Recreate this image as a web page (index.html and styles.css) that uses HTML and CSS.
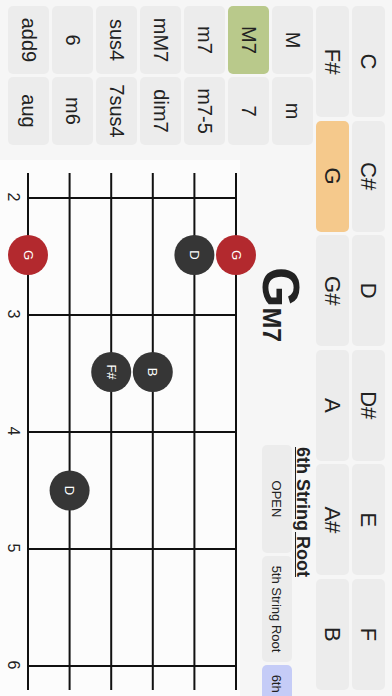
FILE: index.html
```html
<!DOCTYPE html>
<html>

<head>
    <meta charset="utf-8">
    <link rel="stylesheet" href="styles.css">
</head>

<body>
    <!-- the app runs in landscape; the stage is turned a quarter to fit the portrait window -->
    <div class="stage">
        <div class="roots">
            <button class="key">C</button>
            <button class="key">C#</button>
            <button class="key">D</button>
            <button class="key">D#</button>
            <button class="key">E</button>
            <button class="key">F</button>
            <button class="key">F#</button>
            <button class="key selected">G</button>
            <button class="key">G#</button>
            <button class="key">A</button>
            <button class="key">A#</button>
            <button class="key">B</button>
        </div>

        <div class="main">
            <div class="types">
                <button class="type">M</button>
                <button class="type">m</button>
                <button class="type active">M7</button>
                <button class="type">7</button>
                <button class="type">m7</button>
                <button class="type">m7-5</button>
                <button class="type">mM7</button>
                <button class="type">dim7</button>
                <button class="type">sus4</button>
                <button class="type">7sus4</button>
                <button class="type">6</button>
                <button class="type">m6</button>
                <button class="type">add9</button>
                <button class="type">aug</button>
            </div>

            <div class="board">
                <div class="head">
                    <div class="chord"><span class="chord-root">G</span><span class="chord-type">M7</span></div>
                    <div class="panel">
                        <div class="panel-title">6th String Root</div>
                        <div class="forms">
                            <button class="form">OPEN</button>
                            <button class="form">5th String Root</button>
                            <button class="form current">6th String Root</button>
                        </div>
                    </div>
                </div>

                <svg class="neck" width="551" height="260" viewBox="0 0 551 260">
                    <rect x="15" y="20" width="540" height="245" fill="#fcfcfc" />
                    <g stroke="#111" stroke-width="2">
                        <line x1="28" y1="24" x2="545" y2="24" />
                        <line x1="28" y1="65.6" x2="545" y2="65.6" />
                        <line x1="28" y1="107.2" x2="545" y2="107.2" />
                        <line x1="28" y1="148.8" x2="545" y2="148.8" />
                        <line x1="28" y1="190.4" x2="545" y2="190.4" />
                        <line x1="28" y1="232" x2="545" y2="232" />
                        <line x1="53" y1="24" x2="53" y2="232" />
                        <line x1="170" y1="24" x2="170" y2="232" />
                        <line x1="287" y1="24" x2="287" y2="232" />
                        <line x1="404" y1="24" x2="404" y2="232" />
                        <line x1="521" y1="24" x2="521" y2="232" />
                    </g>
                    <g class="fret-no">
                        <text x="52" y="247">2</text>
                        <text x="169" y="247">3</text>
                        <text x="286" y="247">4</text>
                        <text x="403" y="247">5</text>
                        <text x="520" y="247">6</text>
                    </g>
                    <g class="note root">
                        <circle cx="110" cy="24" r="20" />
                        <text x="110" y="24">G</text>
                    </g>
                    <g class="note">
                        <circle cx="110" cy="65.6" r="20" />
                        <text x="110" y="65.6">D</text>
                    </g>
                    <g class="note">
                        <circle cx="227" cy="107.2" r="20" />
                        <text x="227" y="107.2">B</text>
                    </g>
                    <g class="note">
                        <circle cx="227" cy="148.8" r="20" />
                        <text x="227" y="148.8">F#</text>
                    </g>
                    <g class="note">
                        <circle cx="345.5" cy="190.4" r="20" />
                        <text x="345.5" y="190.4">D</text>
                    </g>
                    <g class="note root">
                        <circle cx="110" cy="232" r="20" />
                        <text x="110" y="232">G</text>
                    </g>
                </svg>
            </div>
        </div>
    </div>
</body>

</html>
```

FILE: styles.css
```css
html,
body {
    margin: 0;
    width: 392px;
    height: 696px;
    overflow: hidden;
    background: #f6f6f6;
}

body {
    font-family: "Liberation Sans", Arial, sans-serif;
    color: #222;
}

button {
    font-family: inherit;
    color: #222;
    border: none;
    padding: 0;
    background: #ececec;
    border-radius: 5px;
}

/* landscape stage, turned clockwise into the portrait window */
.stage {
    width: 696px;
    height: 392px;
    box-sizing: border-box;
    padding: 7px 6px 0 6px;
    transform-origin: 0 0;
    transform: translateX(392px) rotate(90deg);
    overflow: hidden;
}

/* root note keys */

.roots {
    display: grid;
    grid-template-columns: repeat(6, 1fr);
    grid-template-rows: 33px 33px;
    gap: 3px 3.5px;
}

.key {
    font-size: 22px;
}

.key.selected {
    background: #f5c98c;
}

.main {
    display: flex;
    margin-top: 3px;
}

/* chord types */

.types {
    display: grid;
    grid-template-columns: 68px 68px;
    grid-auto-rows: 41px;
    gap: 3px;
    flex: none;
}

.type {
    font-size: 20px;
}

.type.active {
    background: #b9c98b;
}

/* fretboard side */

.board {
    width: 551px;
    flex: none;
}

.head {
    display: grid;
    grid-template-columns: 300px auto;
    height: 53px;
}

.chord {
    margin-left: 122px;
    margin-top: 6px;
    line-height: 52px;
    white-space: nowrap;
}

.chord-root {
    font-size: 52px;
    font-weight: bold;
}

.chord-type {
    font-size: 25px;
    font-weight: bold;
}

.panel {
    white-space: nowrap;
}

.panel-title {
    padding-left: 2px;
    font-size: 18px;
    line-height: 20px;
    font-weight: bold;
    text-decoration: underline;
}

.forms {
    display: flex;
    gap: 3px;
    margin-top: 1px;
}

.form {
    flex: none;
    width: 106px;
    height: 30px;
    font-size: 13px;
}

.form:first-child {
    width: 108px;
}

.form.current {
    background: #c5ccf7;
}

.neck {
    display: block;
}

.fret-no text {
    font-size: 16px;
    fill: #222;
    text-anchor: middle;
    dominant-baseline: central;
}

.note circle {
    fill: #363636;
}

.note.root circle {
    fill: #b3292e;
}

.note text {
    font-size: 13px;
    fill: #fff;
    text-anchor: middle;
    dominant-baseline: central;
}
```
